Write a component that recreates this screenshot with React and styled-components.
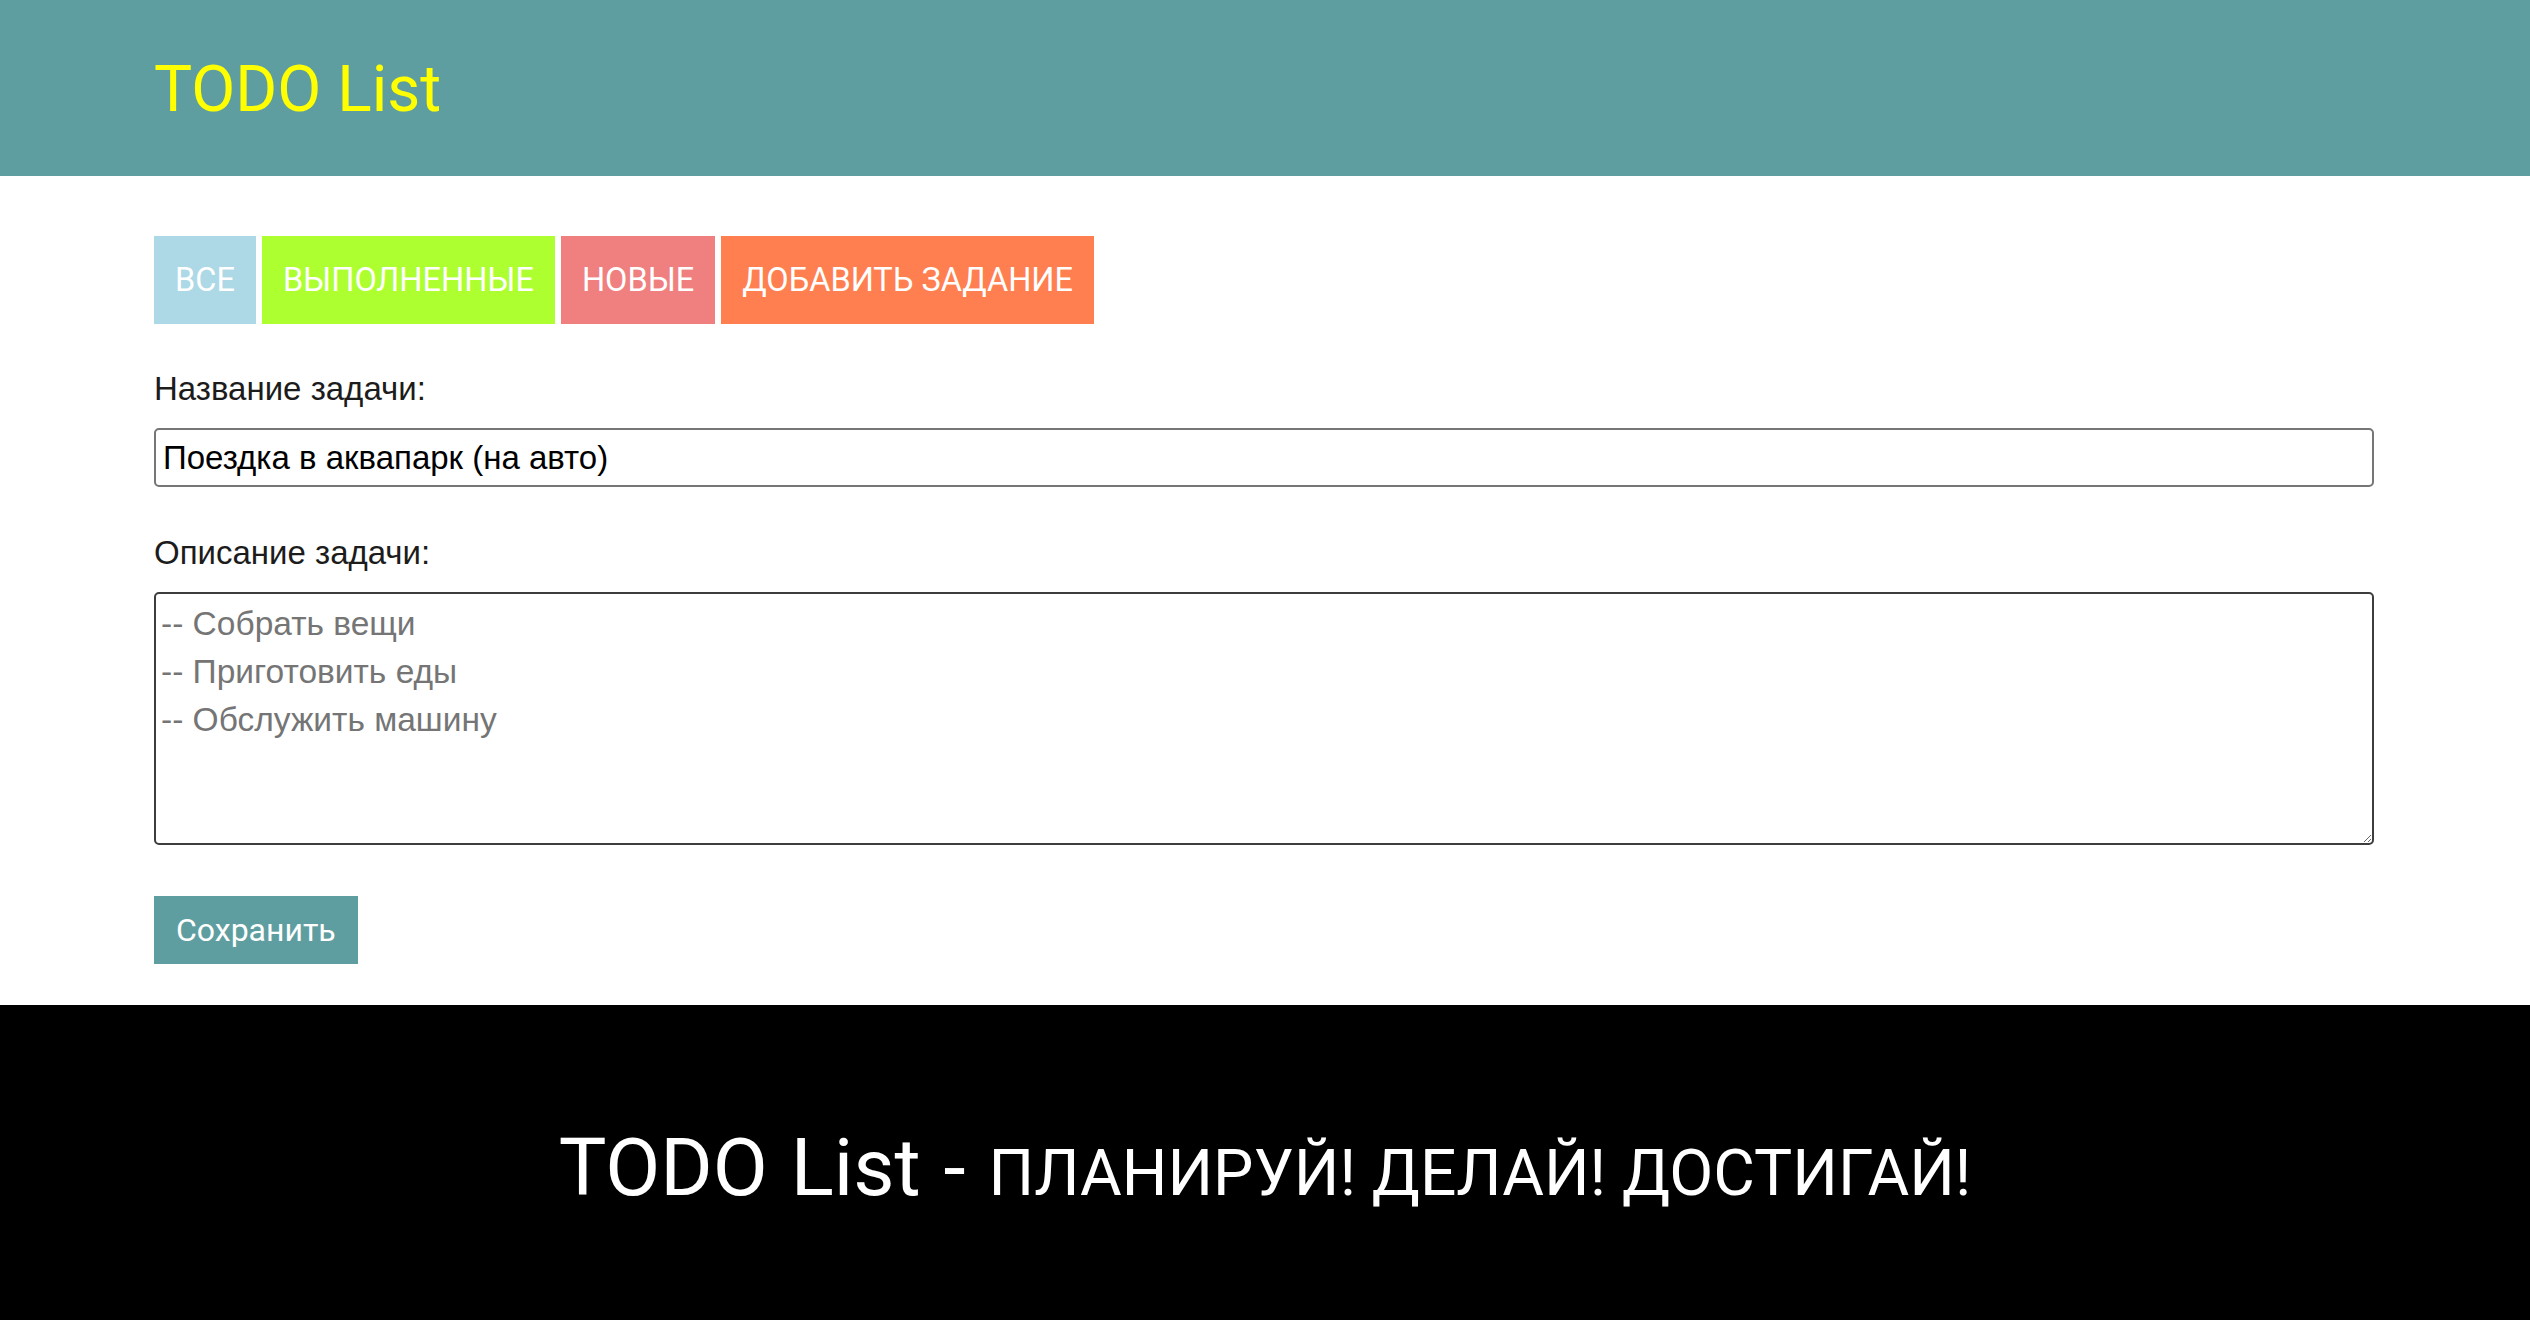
import React from "react";
import styled, { createGlobalStyle } from "styled-components";

const GlobalStyle = createGlobalStyle`
  html, body {
    margin: 0;
    padding: 0;
    background: #ffffff;
  }
  body {
    font-family: Roboto, "Liberation Sans", Arial, sans-serif;
  }
  * {
    box-sizing: border-box;
  }
`;

const filters = [
  { id: "all", title: "Все", color: "#add8e6" },
  { id: "done", title: "Выполненные", color: "#adff2f" },
  { id: "new", title: "Новые", color: "#f08080" },
  { id: "add", title: "Добавить задание", color: "#ff7f50" },
];

const App = () => (
  <Page>
    <GlobalStyle />
    <Header>
      <Logo>TODO List</Logo>
    </Header>
    <Main>
      <Nav>
        {filters.map((f) => (
          <NavButton key={f.id} $color={f.color}>
            {f.title}
          </NavButton>
        ))}
      </Nav>
      <Form onSubmit={(e) => e.preventDefault()}>
        <Label htmlFor="title">Название задачи:</Label>
        <Input
          id="title"
          type="text"
          defaultValue="Поездка в аквапарк (на авто)"
        />
        <Label htmlFor="description" $top={47}>
          Описание задачи:
        </Label>
        <Textarea
          id="description"
          placeholder={"-- Собрать вещи\n-- Приготовить еды\n-- Обслужить машину"}
        />
        <SaveButton type="submit">Сохранить</SaveButton>
      </Form>
    </Main>
    <Footer>
      <Slogan>
        TODO List - <SloganSmall>Планируй! Делай! Достигай!</SloganSmall>
      </Slogan>
    </Footer>
  </Page>
);

const Page = styled.div`
  display: flex;
  flex-direction: column;
  min-height: 1320px;
`;

const Header = styled.header`
  height: 176px;
  padding: 52px 154px 0;
  background: #5f9ea0;
`;

const Logo = styled.h1`
  margin: 0;
  font-family: Roboto, sans-serif;
  font-size: 64px;
  font-weight: 400;
  line-height: normal;
  color: #ffff00;
`;

const Main = styled.main`
  padding: 60px 156px 41px 154px;
`;

const Nav = styled.nav`
  display: flex;
  gap: 6px;
`;

const NavButton = styled.button`
  padding: 25px 21px;
  border: none;
  border-radius: 0;
  background: ${(p) => p.$color};
  color: #ffffff;
  font-family: Roboto, sans-serif;
  font-size: 32.5px;
  line-height: 38px;
  text-transform: uppercase;
  cursor: pointer;
`;

const Form = styled.form`
  display: flex;
  flex-direction: column;
  align-items: flex-start;
  padding-top: 46px;
`;

const Label = styled.label`
  display: block;
  margin-top: ${(p) => p.$top || 0}px;
  margin-bottom: 20px;
  font-family: "Liberation Sans", Arial, sans-serif;
  font-size: 33px;
  line-height: 38px;
  color: #1c1c1c;
`;

const Input = styled.input`
  width: 100%;
  height: 59px;
  padding: 0 7px;
  border: 2px solid #767676;
  border-radius: 5px;
  font-family: "Liberation Sans", Arial, sans-serif;
  font-size: 33px;
  color: #000000;
  outline: none;
`;

const Textarea = styled.textarea`
  display: block;
  width: 100%;
  height: 253px;
  padding: 6px 5px;
  border: 2px solid #3d3d3d;
  border-radius: 5px;
  font-family: "Liberation Sans", Arial, sans-serif;
  font-size: 33.5px;
  line-height: 48px;
  color: #000000;
  resize: vertical;
  outline: none;

  &::placeholder {
    color: #757575;
  }
`;

const SaveButton = styled.button`
  height: 68px;
  margin-top: 51px;
  padding: 0 22px;
  border: none;
  background: #5f9ea0;
  color: #ffffff;
  font-family: Roboto, sans-serif;
  font-size: 32px;
  line-height: 68px;
  cursor: pointer;
`;

const Footer = styled.footer`
  display: flex;
  align-items: center;
  justify-content: center;
  height: 316px;
  padding-top: 10px;
  margin-top: auto;
  background: #000000;
`;

const Slogan = styled.p`
  margin: 0;
  font-family: Roboto, sans-serif;
  font-size: 80px;
  color: #ffffff;
  white-space: nowrap;
  word-spacing: 3px;
`;

const SloganSmall = styled.span`
  font-size: 64px;
  word-spacing: 0;
  text-transform: uppercase;
`;

export default App;
